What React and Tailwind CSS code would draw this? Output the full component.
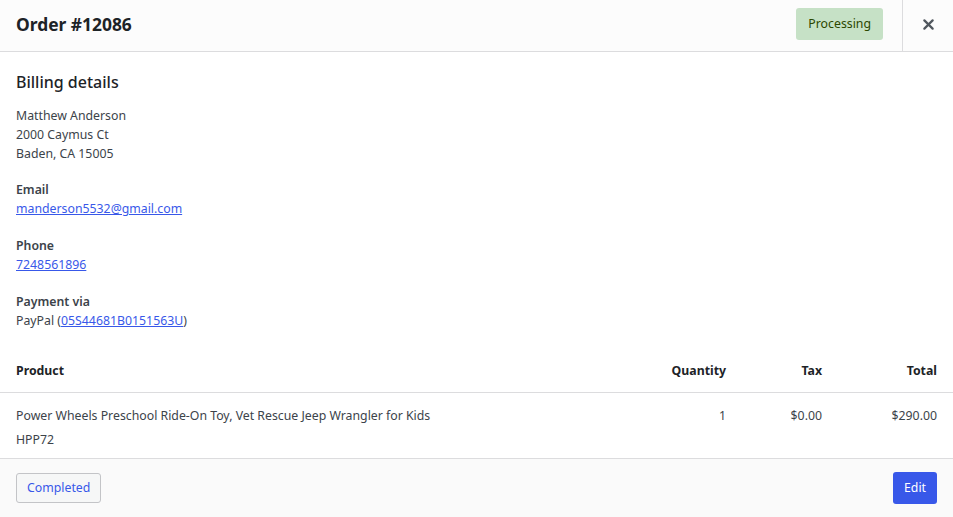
export default function App() {
  const font = { fontFamily: '"Noto Sans", "Open Sans", sans-serif' };
  return (
    <div className="w-[953px] h-[517px] bg-white flex flex-col text-[#3c434a] overflow-hidden" style={font}>
      <div className="h-[52px] flex items-stretch border-b border-[#dcdcde] bg-[#fcfcfc] shrink-0">
        <div className="flex-1 flex items-center pl-4 pb-[3px]">
          <h1 className="text-[17.4px] font-bold text-[#1d2327]">Order #12086</h1>
        </div>
        <div className="flex items-start pt-2 pr-[19px]">
          <span className="h-[32px] px-[12px] flex items-center rounded-[3px] bg-[#c6e1c6] text-[#2c4700] text-[12.3px]">Processing</span>
        </div>
        <button className="w-[51px] border-l border-[#dcdcde] flex items-center justify-center text-[#50575e] pb-[3px]">
          <svg width="11" height="11" viewBox="0 0 12 12"><path d="M1.5 1.5 L10.5 10.5 M10.5 1.5 L1.5 10.5" stroke="currentColor" strokeWidth="2.4" strokeLinecap="round" /></svg>
        </button>
      </div>
      <div className="flex-1 px-4 pt-[18px]">
        <h2 className="text-[16px] font-medium text-[#1d2327] leading-[24px]">Billing details</h2>
        <div className="mt-[12px] text-[12.3px] leading-[19px]">
          <div>Matthew Anderson</div>
          <div>2000 Caymus Ct</div>
          <div>Baden, CA 15005</div>
        </div>
        <div className="mt-[17px] text-[12.3px] leading-[19px]">
          <div className="font-semibold">Email</div>
          <a className="underline text-[#3858e9]" href="#">manderson5532@gmail.com</a>
        </div>
        <div className="mt-[18px] text-[12.3px] leading-[19px]">
          <div className="font-semibold">Phone</div>
          <a className="underline text-[#3858e9]" href="#">7248561896</a>
        </div>
        <div className="mt-[18px] text-[12.3px] leading-[19px]">
          <div className="font-semibold">Payment via</div>
          <div>PayPal (<a className="underline text-[#3858e9]" href="#">05S44681B0151563U</a>)</div>
        </div>
      </div>
      <div className="shrink-0">
        <div className="flex items-center h-[45px] pt-[2px] px-4 border-b border-[#dcdcde] text-[12.3px] font-bold text-[#1d2327]">
          <div className="flex-1">Product</div>
          <div className="w-[120px] text-right">Quantity</div>
          <div className="w-[96px] text-right">Tax</div>
          <div className="w-[115px] text-right">Total</div>
        </div>
        <div className="h-[66px] px-4 pt-[13px] text-[12.3px] leading-[19px] border-b border-[#dcdcde]">
          <div className="flex">
            <div className="flex-1">Power Wheels Preschool Ride-On Toy, Vet Rescue Jeep Wrangler for Kids</div>
            <div className="w-[120px] text-right">1</div>
            <div className="w-[96px] text-right">$0.00</div>
            <div className="w-[115px] text-right">$290.00</div>
          </div>
          <div className="mt-[5px]">HPP72</div>
        </div>
      </div>
      <div className="h-[58px] shrink-0 bg-[#fafafa] flex items-center justify-between px-4">
        <button className="h-[30px] px-[10px] rounded-[3px] border border-[#c3c4c7] bg-[#f6f7f7] text-[#3858e9] text-[12.3px]">Completed</button>
        <button className="h-[32px] px-[11px] rounded-[3px] bg-[#3858e9] text-white text-[12.3px]">Edit</button>
      </div>
    </div>
  );
}
